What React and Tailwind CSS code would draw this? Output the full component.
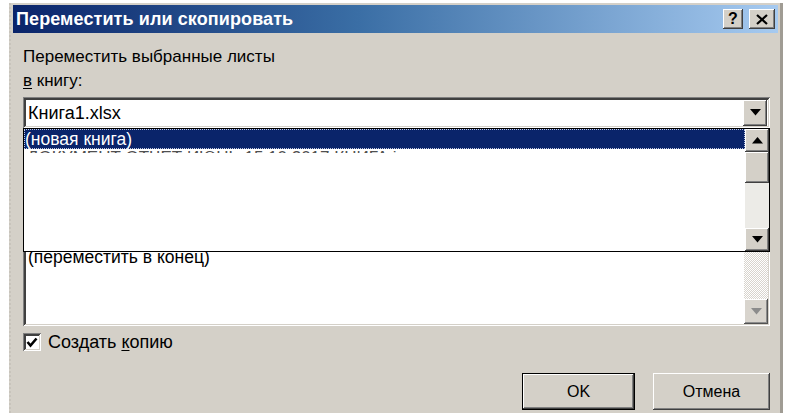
import React from "react";

const raised =
  "shadow-[inset_-1px_-1px_0_#404040,inset_1px_1px_0_#ffffff,inset_-2px_-2px_0_#808080,inset_2px_2px_0_#d4d0c8]";
const sunken =
  "shadow-[inset_1px_1px_0_#808080,inset_-1px_-1px_0_#ffffff,inset_2px_2px_0_#404040,inset_-2px_-2px_0_#d4d0c8,inset_3px_3px_0_#404040]";

function Arrow({ dir = "down", color = "#000" }) {
  return (
    <svg width="11" height="7" viewBox="0 0 11 7">
      {dir === "down" ? (
        <polygon points="0,0 11,0 5.5,6.5" fill={color} />
      ) : (
        <polygon points="0,6.5 11,6.5 5.5,0" fill={color} />
      )}
    </svg>
  );
}

function ScrollBtn({ dir, color, h = "h-[23px]" }) {
  return (
    <div className={`w-[24px] shrink-0 ${h} bg-[#d4d0c8] ${raised} flex items-center justify-center`}>
      <Arrow dir={dir} color={color} />
    </div>
  );
}

export default function App() {
  const font = { fontFamily: '"Liberation Sans", Tahoma, sans-serif' };
  return (
    <div className="w-[793px] h-[415px] bg-white overflow-hidden relative" style={font}>
      <div className="absolute left-[9px] top-[3px] w-[774px] h-[410px] border-l-2 border-dotted border-l-[#c8c4bc] bg-[#d4d0c8] shadow-[inset_-3px_0_0_#a09c94] flex flex-col">
        {/* title bar */}
        <div className="shrink-0 mt-[2px] ml-[2px] mr-[5px] h-[28px] flex items-center bg-[linear-gradient(90deg,#0a246a_0%,#3a6ea5_45%,#a6caf0_100%)]">
          <span className="pl-[3px] text-white font-bold text-[18px] leading-none tracking-[0.1px]">
            Переместить или скопировать
          </span>
          <div className="ml-auto flex items-center gap-[6px] pr-[3px]">
            <div className={`w-[20px] h-[20px] bg-[#d4d0c8] ${raised} flex items-center justify-center text-[16px] font-bold text-black leading-none`}>
              ?
            </div>
            <div className={`w-[26px] h-[20px] bg-[#d4d0c8] ${raised} flex items-center justify-center`}>
              <svg width="12" height="11" viewBox="0 0 12 11">
                <path d="M1 1 L11 10 M11 1 L1 10" stroke="#000" strokeWidth="2.2" />
              </svg>
            </div>
          </div>
        </div>

        {/* content */}
        <div className="relative shrink-0 pl-[12px] pr-[13px] text-black">
          <div className="mt-[13px] text-[17px] leading-[22px]">Переместить выбранные листы</div>
          <div className="mt-[2px] text-[17px] leading-[22px]">
            <span className="underline underline-offset-2">в</span> книгу:
          </div>

          {/* combobox */}
          <div className={`mt-[5px] h-[31px] bg-white ${sunken} flex items-center pl-[5px] pr-[3px]`}>
            <span className="text-[18px] leading-none">Книга1.xlsx</span>
            <div className={`ml-auto w-[24px] h-[26px] bg-[#d4d0c8] ${raised} flex items-center justify-center`}>
              <Arrow dir="down" />
            </div>
          </div>

          {/* hidden label under dropdown */}
          <div className="mt-[6px] text-[17px] leading-[22px]">Перед листом:</div>

          {/* lower listbox */}
          <div className={`mt-[4px] h-[166px] bg-white ${sunken} flex pl-[3px] pt-[3px] pb-[2px] pr-[2px]`}>
            <div className="flex-1 pl-[2px] pt-[84px] text-[17.5px] leading-[20px]">(переместить в конец)</div>
            <div className="w-[24px] flex flex-col bg-[repeating-conic-gradient(#ffffff_0_25%,#d4d0c8_0_50%)] bg-[length:2px_2px] opacity-90">
              <div className="flex-1" />
              <ScrollBtn dir="down" color="#808080" h="h-[25px]" />
            </div>
          </div>

          {/* checkbox */}
          <div className="mt-[7px] h-[18px] flex items-center gap-[7px]">
            <div className={`w-[18px] h-[18px] bg-white ${sunken} flex items-center justify-center`}>
              <svg width="12" height="11" viewBox="0 0 12 11">
                <path d="M1.5 5 L4.5 8.5 L10.5 1.5" stroke="#000" strokeWidth="2.6" fill="none" />
              </svg>
            </div>
            <span className="text-[18px] leading-none">
              Создать <span className="underline underline-offset-2">к</span>опию
            </span>
          </div>

          {/* buttons */}
          <div className="mt-[22px] flex justify-end gap-[18px]">
            <div className="w-[113px] h-[37px] border border-black">
              <div className={`w-full h-full bg-[#d4d0c8] ${raised} flex items-center justify-center text-[16px]`}>
                OK
              </div>
            </div>
            <div className={`w-[117px] h-[37px] bg-[#d4d0c8] ${raised} flex items-center justify-center text-[16px]`}>
              Отмена
            </div>
          </div>

          {/* dropdown list overlay */}
          <div className="absolute left-[12px] right-[13px] top-[95px] h-[124px] bg-white border border-black flex">
            <div className="flex-1 flex flex-col">
              <div className="h-[20px] bg-[#0a246a] text-white text-[17.5px] leading-[20px] pl-[1px] outline outline-1 outline-dotted outline-[#c0c8e0] -outline-offset-1">
                (новая книга)
              </div>
              <div className="h-[4px] overflow-hidden text-[17px] leading-[20px] pl-[3px] text-[#505050]">
                <div className="-mt-[1px] whitespace-nowrap">ДОКУМЕНТ ОТЧЕТ ИЮНЬ 15.10.2017 КНИГА і</div>
              </div>
            </div>
            <div className="w-[24px] flex flex-col bg-[#ecebe7]">
              <ScrollBtn dir="up" />
              <div className={`h-[31px] shrink-0 bg-[#d4d0c8] ${raised}`} />
              <div className="flex-1" />
              <ScrollBtn dir="down" />
            </div>
          </div>
        </div>
      </div>
    </div>
  );
}
